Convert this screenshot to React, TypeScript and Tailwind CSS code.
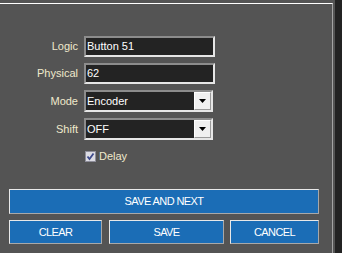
const font = { fontFamily: '"Liberation Sans", Arial, sans-serif' }

function TextBox({ value }: { value: string }) {
  return (
    <div className="flex h-[21px] w-[131px] items-center border-2 border-t-[#8c8c8c] border-l-[#8c8c8c] border-b-[#e6e6e6] border-r-[#e6e6e6] bg-[#232323] pl-[1px] text-[11px] text-white">
      {value}
    </div>
  )
}

function SelectBox({ value }: { value: string }) {
  return (
    <div className="flex h-[22px] w-[129px] items-center border-2 border-t-[#8c8c8c] border-l-[#8c8c8c] border-b-[#e6e6e6] border-r-[#e6e6e6] bg-[#232323] text-[11px] text-white">
      <span className="flex-1 pl-[1px]">{value}</span>
      <div className="flex h-[18px] w-[17px] items-center justify-center border border-t-white border-l-white border-b-[#9a9a9a] border-r-[#9a9a9a] bg-[#f0f0f0]">
        <svg width="7" height="4" viewBox="0 0 7 4">
          <path d="M0 0h7L3.5 4z" fill="#000" />
        </svg>
      </div>
    </div>
  )
}

function Row({ label, children }: { label: string; children: React.ReactNode }) {
  return (
    <div className="flex items-center gap-[6px]">
      <span className="w-[69px] text-right text-[11px] text-[#efe9cc]">{label}</span>
      {children}
    </div>
  )
}

function Btn({ label, className }: { label: string; className: string }) {
  return (
    <button
      className={`flex items-center justify-center border border-t-[#e8e8e8] border-l-[#e8e8e8] border-b-[#a8a8a8] border-r-[#a8a8a8] bg-[#1b6db6] text-[11px] tracking-[-0.6px] text-white ${className}`}
    >
      {label}
    </button>
  )
}

export default function App() {
  return (
    <div style={font} className="flex h-[253px] w-[342px] bg-[#232323]">
      <div className="w-[335px] bg-[#545454] pt-[3px]">
        <div className="h-[250px] w-[333px] border-t border-r border-t-white border-r-[#a4a4a4] px-[9px] pt-[32px]">
          <div className="flex flex-col gap-[6px]">
            <Row label="Logic">
              <TextBox value="Button 51" />
            </Row>
            <Row label="Physical">
              <TextBox value="62" />
            </Row>
            <Row label="Mode">
              <SelectBox value="Encoder" />
            </Row>
            <Row label="Shift">
              <SelectBox value="OFF" />
            </Row>
          </div>

          <div className="mt-[11px] flex h-[11px] items-center gap-[3px] pl-[76px] leading-none">
            <div className="flex h-[11px] w-[11px] items-center justify-center border border-[#8e8e9a] bg-[#dcdce4]">
              <svg width="9" height="9" viewBox="0 0 9 9">
                <path d="M1.5 4.5l2 2.5L7.5 1.5" stroke="#3d4a8c" strokeWidth="1.8" fill="none" />
              </svg>
            </div>
            <span className="text-[11px] text-[#efe9cc]">Delay</span>
          </div>

          <div className="mt-[27px] flex flex-col gap-[6px]">
            <Btn label="SAVE AND NEXT" className="h-[25px] w-[310px]" />
            <div className="flex">
              <Btn label="CLEAR" className="h-[24px] w-[93px]" />
              <Btn label="SAVE" className="ml-[7px] h-[24px] w-[115px]" />
              <Btn label="CANCEL" className="ml-[6px] h-[24px] w-[89px]" />
            </div>
          </div>
        </div>
      </div>
    </div>
  )
}
